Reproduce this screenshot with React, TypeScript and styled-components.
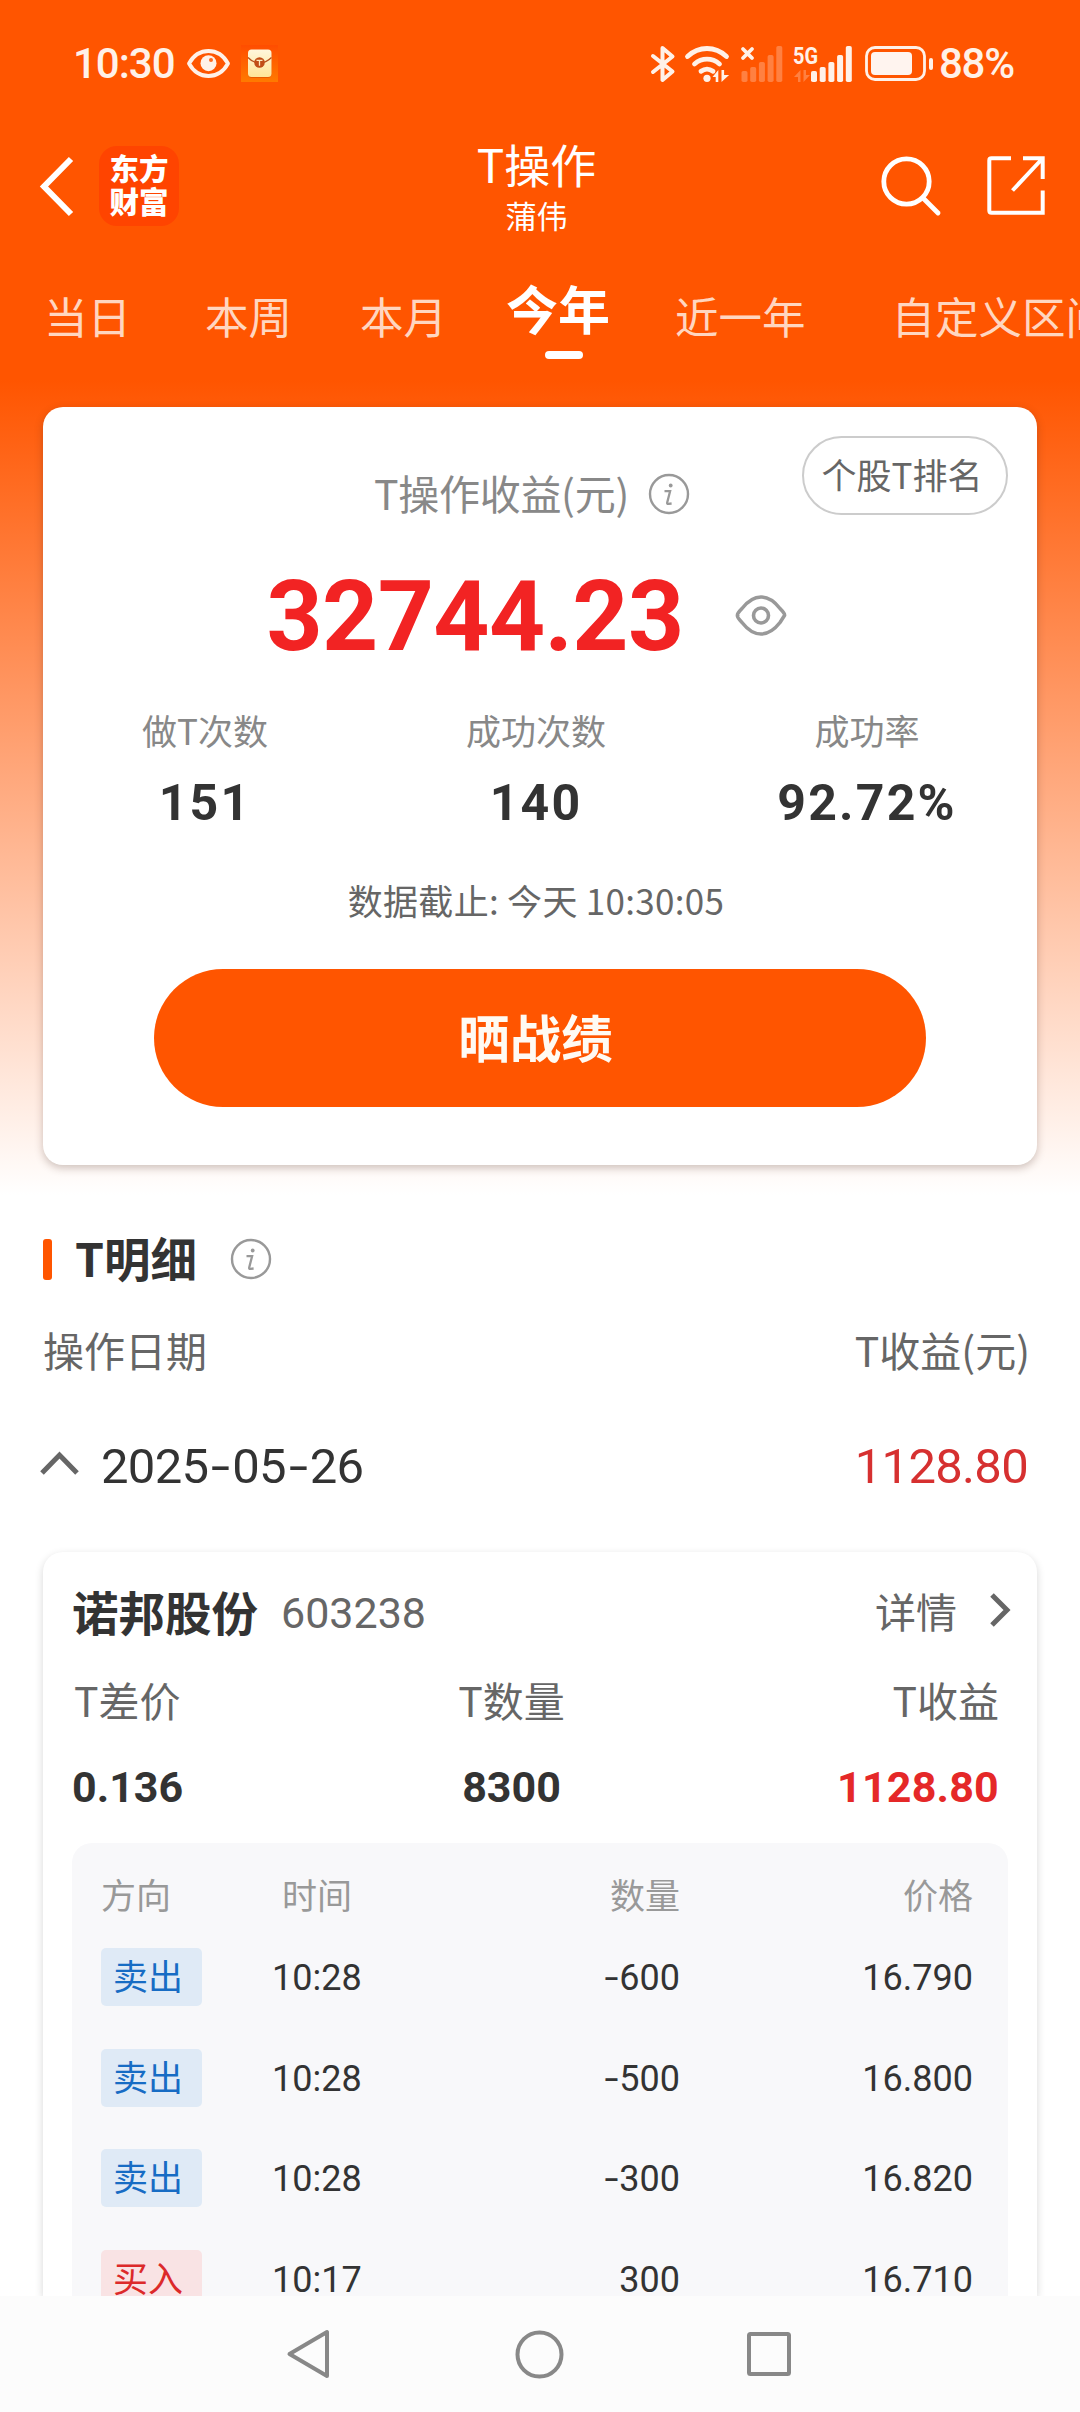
import React from "react";
import styled, { createGlobalStyle } from "styled-components";

const cjk = `"Noto Sans CJK SC", "Noto Sans", sans-serif`;
const digits = `Roboto, "Noto Sans CJK SC", sans-serif`;

const GlobalStyle = createGlobalStyle`
  * { box-sizing: border-box; }
  body { margin: 0; background: #fff; font-family: ${cjk}; color: #333; }
  button { font: inherit; border: 0; padding: 0; background: none; color: inherit; }
`;

const Screen = styled.div`
  width: 1080px;
  height: 2412px;
  overflow: hidden;
  display: flex;
  flex-direction: column;
  background: linear-gradient(180deg, #ff5500 0, #ff5500 380px, #ffffff 1195px);
  white-space: nowrap;
`;

/* ---------- status bar ---------- */
const StatusBar = styled.div`
  flex: none;
  height: 127px;
  padding: 0 66px 0 73px;
  display: flex;
  align-items: center;
  justify-content: space-between;
  color: #fff1e8;
`;
const StatusGroup = styled.div`
  display: flex;
  align-items: center;
`;
const StatusText = styled.span<{ $spacing: string; $ml?: number }>`
  font: 500 42px/42px ${digits};
  letter-spacing: ${(p) => p.$spacing};
  margin-left: ${(p) => p.$ml ?? 0}px;
`;
const Glyph = styled.svg<{ $ml?: number; $lift?: number }>`
  flex: none;
  display: block;
  overflow: visible;
  margin-left: ${(p) => p.$ml ?? 0}px;
  margin-bottom: ${(p) => p.$lift ?? 0}px;
`;

/* ---------- header ---------- */
const Header = styled.header`
  flex: none;
  height: 117px;
  padding: 0 35px 0 40px;
  display: grid;
  grid-template-columns: 400px 1fr 400px;
  align-items: center;
`;
const HeaderSide = styled.div<{ $end?: boolean }>`
  display: flex;
  align-items: center;
  justify-content: ${(p) => (p.$end ? "flex-end" : "flex-start")};
`;
const Logo = styled.div`
  width: 80px;
  height: 80px;
  margin-left: 25px;
  padding-bottom: 3px;
  border-radius: 18px;
  background: #ff4400;
  color: #fff;
  display: flex;
  flex-direction: column;
  align-items: center;
  justify-content: center;
  font-weight: 900;
  font-size: 29.5px;
  line-height: 33.5px;
`;
const TitleBlock = styled.div`
  display: flex;
  flex-direction: column;
  align-items: center;
  margin-right: 12px;
  color: #fff;
`;
const Title = styled.h1`
  margin: 0;
  font-weight: 400;
  font-size: 46px;
  line-height: 58px;
`;
const Subtitle = styled.div`
  font-size: 31px;
  line-height: 46px;
`;

/* ---------- tabs ---------- */
const Tabs = styled.nav`
  flex: none;
  height: 163px;
  padding-left: 44px;
  display: flex;
  align-items: flex-start;
  overflow: hidden;
`;
const Tab = styled.button<{ $gap?: number }>`
  flex: none;
  margin-left: ${(p) => p.$gap ?? 0}px;
  height: 120px;
  padding-top: 40px;
  display: flex;
  flex-direction: column;
  align-items: center;
  font-size: 43.5px;
  line-height: 64px;
  color: #ffd6c0;
`;
const ActiveTab = styled(Tab)`
  padding-top: 31px;
  font-size: 52px;
  font-weight: 700;
  line-height: 66px;
  color: #fff;
`;
const TabLine = styled.span`
  width: 38px;
  height: 8px;
  margin: 10px 0 0 11px;
  border-radius: 4px;
  background: #fff;
`;

/* ---------- summary card ---------- */
const Card = styled.section`
  flex: none;
  margin: 0 43px;
  border-radius: 20px;
  background: #fff;
  box-shadow: 0 3px 9px rgba(60, 30, 20, 0.26);
`;
const SummaryCard = styled(Card)`
  position: relative;
  height: 758px;
  display: flex;
  flex-direction: column;
  align-items: center;
`;
const RankButton = styled.button`
  position: absolute;
  top: 29px;
  right: 29px;
  width: 206px;
  height: 79px;
  padding: 0 6px 3px 0;
  border: 2px solid #ccc;
  border-radius: 40px;
  font-size: 35px;
  line-height: 72px;
  color: #666;
`;
const SummaryTitle = styled.div`
  margin-top: 58px;
  height: 58px;
  padding-right: 17px;
  display: flex;
  align-items: center;
  gap: 20px;
  font-size: 41px;
  line-height: 58px;
  letter-spacing: -0.3px;
  color: #888;
`;
const SummaryName = styled.span`
  padding-bottom: 5px;
`;
const AmountRow = styled.div`
  height: 100px;
  margin-top: 44px;
  padding-right: 27px;
  display: flex;
  align-items: center;
  gap: 51px;
`;
const Amount = styled.span`
  font: 700 98px/100px ${digits};
  letter-spacing: -0.6px;
  color: #f22323;
`;
const Stats = styled.div`
  width: 993px;
  margin: 38px 8px 0 0;
  display: grid;
  grid-template-columns: repeat(3, 1fr);
`;
const Stat = styled.div`
  display: flex;
  flex-direction: column;
  align-items: center;
`;
const StatLabel = styled.div`
  font-size: 35px;
  line-height: 50px;
  color: #888;
`;
const StatValue = styled.div`
  margin-top: 18px;
  font: 700 50px/60px ${digits};
  letter-spacing: 2.2px;
  color: #333;
`;
const Deadline = styled.div`
  margin: 42px 8px 0 0;
  font-size: 35px;
  line-height: 50px;
  letter-spacing: 0.3px;
  color: #666;
`;
const ShareButton = styled.button`
  width: 772px;
  height: 138px;
  margin-top: 44px;
  padding: 0 9px 5px 0;
  border-radius: 69px;
  background: #ff5500;
  color: #fffaf3;
  font-size: 51.5px;
  font-weight: 700;
  line-height: 133px;
`;

/* ---------- detail list ---------- */
const SectionHead = styled.div`
  flex: none;
  height: 60px;
  margin: 64px 43px 0;
  display: flex;
  align-items: center;
`;
const Accent = styled.span`
  width: 9px;
  height: 41px;
  border-radius: 3px;
  background: #ff5500;
`;
const SectionTitle = styled.h2`
  margin: 0 34px 4px 23px;
  font-weight: 700;
  font-size: 46.5px;
  line-height: 60px;
`;
const Line = styled.div<{ $top: number; $h: number }>`
  flex: none;
  height: ${(p) => p.$h}px;
  margin-top: ${(p) => p.$top}px;
  padding: 0 27px 0 29px;
  display: flex;
  align-items: center;
  justify-content: space-between;
`;
const ColumnLine = styled(Line)`
  padding: 0 50px 4px 43px;
`;
const DateLine = styled(Line)`
  padding: 0 52px 0 40px;
`;
const Label = styled.span<{ $size?: number; $tone?: string }>`
  font-size: ${(p) => p.$size ?? 41}px;
  color: ${(p) => p.$tone ?? "#666"};
`;
const DateGroup = styled.div`
  display: flex;
  align-items: center;
`;
const Digits = styled.span<{ $size: number; $bold?: boolean; $tone?: string; $ls?: number; $ml?: number; $mr?: number; $drop?: number }>`
  font: ${(p) => (p.$bold ? 700 : 400)} ${(p) => p.$size}px/1.2 ${digits};
  letter-spacing: ${(p) => p.$ls ?? 0}px;
  margin-left: ${(p) => p.$ml ?? 0}px;
  margin-right: ${(p) => p.$mr ?? 0}px;
  padding-top: ${(p) => p.$drop ?? 0}px;
  color: ${(p) => p.$tone ?? "#333"};
`;
const Dash = styled.span<{ $pad: number }>`
  display: inline-block;
  transform: scaleX(1.4);
  padding: 0 ${(p) => p.$pad}px;
`;
const ListViewport = styled.div`
  flex: none;
  height: 798px;
  overflow: hidden;
  display: flex;
  flex-direction: column;
`;
const StockCard = styled(Card)`
  height: 744px;
  margin-top: 54px;
  border-radius: 20px 20px 0 0;
  box-shadow: 0 3px 9px rgba(0, 0, 0, 0.16);
`;
const StockName = styled.span`
  font-size: 46.5px;
  font-weight: 700;
`;
const ThreeCols = styled.div<{ $top: number }>`
  height: 60px;
  margin-top: ${(p) => p.$top}px;
  padding: 0 38px 0 31px;
  display: grid;
  grid-template-columns: 1fr 1fr 1fr;
  align-items: center;
  & > :nth-child(2) { justify-self: center; margin-right: 50px; }
  & > :nth-child(3) { justify-self: end; }
`;
const TradeTable = styled.div`
  margin: 25px 29px 0;
  height: 520px;
  padding-top: 21px;
  border-radius: 20px 20px 0 0;
  background: #f8f8fa;
`;
const TradeRow = styled.div<{ $h: number }>`
  height: ${(p) => p.$h}px;
  padding: 0 35px 0 29px;
  display: grid;
  grid-template-columns: 172px 200px 207px 1fr;
  align-items: center;
  & > :nth-child(3), & > :nth-child(4) { justify-self: end; }
`;
const TradeHead = styled(TradeRow)`
  margin-bottom: 5px;
`;
const TimeHead = styled(Label)`
  padding-left: 9px;
`;
const Badge = styled.span<{ $buy?: boolean }>`
  width: 101px;
  height: 58px;
  padding-left: 12px;
  border-radius: 5px;
  font-size: 35px;
  line-height: 54px;
  color: ${(p) => (p.$buy ? "#dc2a2a" : "#176cc4")};
  background: ${(p) => (p.$buy ? "#f9e3e4" : "#dfeaf6")};
`;

/* ---------- system navigation ---------- */
const NavBar = styled.footer`
  flex: none;
  height: 116px;
  padding: 0 289px 0 287px;
  display: flex;
  align-items: center;
  justify-content: space-between;
  background: #fcfcfc;
`;

const InfoIcon = () => (
  <Glyph width="40" height="40" viewBox="0 0 40 40" fill="none" stroke="#999">
    <circle cx="20" cy="20" r="19" strokeWidth="2.4" />
    <circle cx="21.7" cy="11.5" r="1.9" fill="#999" stroke="none" />
    <path d="M15.500 17.200h5.600l-2.900 11.200q-.4 1.800 1.400 1.400l3-.3" strokeWidth="2.300" />
  </Glyph>
);

const SignalBars = ({ x, opacity }: { x: number; opacity: number }) => (
  <g fill="currentColor" opacity={opacity}>
    {[11, 15, 20, 27, 36].map((h, i) => (
      <rect key={h} x={x + i * 8.7} y={36 - h} width="6" height={h} rx="1.8" />
    ))}
  </g>
);

const trades = [
  { buy: false, time: "10:28", qty: -600, price: "16.790" },
  { buy: false, time: "10:28", qty: -500, price: "16.800" },
  { buy: false, time: "10:28", qty: -300, price: "16.820" },
  { buy: true, time: "10:17", qty: 300, price: "16.710" },
];

export default function App() {
  return (
    <>
      <GlobalStyle />
      <Screen>
        <StatusBar>
          <StatusGroup>
            <StatusText $spacing="-1px">10:30</StatusText>
            <Glyph $ml={12} width="43" height="29" viewBox="0 0 43 29">
              <path d="M2 14.500C7 5.500 14 2 21.500 2S36 5.500 41 14.500C36 23.500 29 27 21.500 27S7 23.500 2 14.500Z" fill="none" stroke="currentColor" strokeWidth="3.800" strokeLinejoin="round" />
              <circle cx="21.500" cy="14.200" r="8" fill="currentColor" />
              <circle cx="24" cy="11" r="2" fill="#ff6a20" />
            </Glyph>
            <Glyph $ml={11} width="37" height="37" viewBox="0 0 37 37">
              <defs>
                <linearGradient id="tile" x1="0" y1="0" x2="0" y2="1">
                  <stop offset="0" stopColor="#ff4d00" />
                  <stop offset="1" stopColor="#ff7a00" />
                </linearGradient>
                <linearGradient id="paper" x1="0" y1="0" x2="0" y2="1">
                  <stop offset="0" stopColor="#fff6dc" />
                  <stop offset="1" stopColor="#ffe596" />
                </linearGradient>
              </defs>
              <rect width="37" height="37" fill="url(#tile)" />
              <rect x="7" y="5" width="23.500" height="28" rx="4" fill="#d94a00" opacity=".6" />
              <rect x="7" y="4.500" width="23.500" height="27.500" rx="3.500" fill="url(#paper)" />
              <path d="M7 12.500Q12 18 18.500 18T30.500 12.500" fill="none" stroke="#b8501c" strokeWidth="1.300" />
              <circle cx="18.500" cy="17.500" r="5.300" fill="#c24d16" />
              <path d="M15.500 15.300h6M18.500 15.300v5.500" stroke="#ffe9bd" strokeWidth="1.300" />
            </Glyph>
          </StatusGroup>
          <StatusGroup>
            <Glyph width="24" height="36" viewBox="0 0 24 36" fill="none" stroke="currentColor" strokeWidth="4" strokeLinecap="round" strokeLinejoin="round">
              <path d="M2 10L21.500 25.500L11.500 34V2L21.500 10.500L2 26" />
            </Glyph>
            <Glyph $ml={10} width="45" height="36" viewBox="0 0 45 36" fill="none" stroke="currentColor" strokeWidth="4.800" strokeLinecap="round">
              <path d="M2.500 10.500Q11 2.500 22 2.500T41.500 10.500" />
              <path d="M9.500 18Q15 13.200 22 13.200T34.500 18" />
              <path d="M16 25.300Q22 21 28 25.300" />
              <circle cx="22" cy="32.300" r="3.600" fill="currentColor" stroke="none" />
              <path d="M33.800 24v12h-2.600v-5H28zM37 24h2.600v5h5L37 36z" fill="currentColor" stroke="none" transform="translate(-.5 0)" />
            </Glyph>
            <Glyph $ml={11} width="42" height="36" viewBox="0 0 42 36">
              <path d="M2 3l9 9M11 3l-9 9" stroke="currentColor" strokeWidth="3.800" strokeLinecap="round" />
              <SignalBars x={0.5} opacity={0.28} />
            </Glyph>
            <Glyph $ml={11} width="57" height="36" viewBox="0 0 57 36">
              <text x="-1" y="17.500" fontFamily="Roboto, sans-serif" fontSize="24" fontWeight="700" fill="currentColor" textLength="25" lengthAdjust="spacingAndGlyphs">5G</text>
              <path d="M6.500 24v12H4v-5H0zM9.500 24H12v5h4L9.500 36z" fill="currentColor" opacity=".28" />
              <SignalBars x={17} opacity={1} />
            </Glyph>
            <Glyph $ml={14} width="69" height="35" viewBox="0 0 69 35">
              <rect x="1.500" y="1.500" width="58" height="32" rx="8.500" fill="none" stroke="currentColor" strokeWidth="2.800" />
              <rect x="6" y="6" width="41" height="23" rx="4" fill="#fff4ef" />
              <rect x="64" y="12" width="4" height="12" rx="2" fill="currentColor" />
            </Glyph>
            <StatusText $spacing="-1.2px" $ml={5}>88%</StatusText>
          </StatusGroup>
        </StatusBar>

        <Header>
          <HeaderSide>
            <Glyph width="34" height="60" viewBox="0 0 34 60" fill="none" stroke="#fff" strokeWidth="6">
              <path d="M31 3L4 30.500L31 58" />
            </Glyph>
            <Logo>
              <span>东方</span>
              <span>财富</span>
            </Logo>
          </HeaderSide>
          <TitleBlock>
            <Title>T操作</Title>
            <Subtitle>蒲伟</Subtitle>
          </TitleBlock>
          <HeaderSide $end>
            <Glyph width="60" height="60" viewBox="0 0 60 60" fill="none" stroke="#fff" strokeWidth="4.800" strokeLinecap="round">
              <circle cx="25.500" cy="25.500" r="22.700" />
              <path d="M42 42L57 57" />
            </Glyph>
            <Glyph $ml={46} width="58" height="59" viewBox="0 0 58 59" fill="none" stroke="#fff" strokeWidth="4">
              <path d="M24 2.300H4.500Q2.300 2.300 2.300 4.500V54.500Q2.300 56.700 4.500 56.700H55.700V34.500" />
              <path d="M36 2.300H55.700V23M55 3L25.500 34.500" />
            </Glyph>
          </HeaderSide>
        </Header>

        <Tabs>
          <Tab>当日</Tab>
          <Tab $gap={74}>本周</Tab>
          <Tab $gap={68}>本月</Tab>
          <ActiveTab $gap={59}>
            今年
            <TabLine />
          </ActiveTab>
          <Tab $gap={65}>近一年</Tab>
          <Tab $gap={86}>自定义区间</Tab>
        </Tabs>

        <SummaryCard>
          <RankButton>个股T排名</RankButton>
          <SummaryTitle>
            <SummaryName>T操作收益(元)</SummaryName>
            <InfoIcon />
          </SummaryTitle>
          <AmountRow>
            <Amount>32744.23</Amount>
            <Glyph $lift={4} width="52" height="41" viewBox="0 0 52 41" fill="none" stroke="#999" strokeWidth="3.600">
              <path d="M2.500 20.500Q1.500 19 7 13.500Q16 2 26 2T45 13.500Q50.500 19 49.500 20.500T45 27.500Q36 39 26 39T7 27.500Q1.500 22 2.500 20.500Z" />
              <circle cx="26" cy="20.500" r="7.500" />
            </Glyph>
          </AmountRow>
          <Stats>
            <Stat><StatLabel>做T次数</StatLabel><StatValue>151</StatValue></Stat>
            <Stat><StatLabel>成功次数</StatLabel><StatValue>140</StatValue></Stat>
            <Stat><StatLabel>成功率</StatLabel><StatValue>92.72%</StatValue></Stat>
          </Stats>
          <Deadline>数据截止: 今天 10:30:05</Deadline>
          <ShareButton>晒战绩</ShareButton>
        </SummaryCard>

        <SectionHead>
          <Accent />
          <SectionTitle>T明细</SectionTitle>
          <InfoIcon />
        </SectionHead>

        <ColumnLine $top={32} $h={60}>
          <Label>操作日期</Label>
          <Label>T收益(元)</Label>
        </ColumnLine>

        <DateLine $top={56} $h={61}>
          <DateGroup>
            <Glyph $lift={7} width="39" height="25" viewBox="0 0 39 25" fill="none" stroke="#666" strokeWidth="5">
              <path d="M2 22L19.500 4L37 22" />
            </Glyph>
            <Digits $size={49} $ml={22} $ls={-0.7}>2025<Dash $pad={5.5}>-</Dash>05<Dash $pad={5.5}>-</Dash>26</Digits>
          </DateGroup>
          <Digits $size={49} $tone="#d63030" $ls={-0.7}>1128.80</Digits>
        </DateLine>

        <ListViewport>
          <StockCard>
            <Line $top={28} $h={60}>
              <DateGroup>
                <StockName>诺邦股份</StockName>
                <Digits $size={43} $ml={23} $tone="#666" $drop={8}>603238</Digits>
              </DateGroup>
              <DateGroup>
                <Label>详情</Label>
                <Glyph $ml={33} width="20" height="34" viewBox="0 0 20 34" fill="none" stroke="#666" strokeWidth="5">
                  <path d="M2 2L17 17L2 32" />
                </Glyph>
              </DateGroup>
            </Line>
            <ThreeCols $top={29}>
              <Label>T差价</Label>
              <Label>T数量</Label>
              <Label>T收益</Label>
            </ThreeCols>
            <ThreeCols $top={29}>
              <Digits $size={43} $bold $ml={-2}>0.136</Digits>
              <Digits $size={43} $bold>8300</Digits>
              <Digits $size={43} $bold $tone="#e52828" $ls={0.2}>1128.80</Digits>
            </ThreeCols>
            <TradeTable>
              <TradeHead $h={58}>
                <Label $size={35} $tone="#999">方向</Label>
                <TimeHead $size={35} $tone="#999">时间</TimeHead>
                <Label $size={35} $tone="#999">数量</Label>
                <Label $size={35} $tone="#999">价格</Label>
              </TradeHead>
              {trades.map((t, i) => (
                <TradeRow key={i} $h={100.6}>
                  <Badge $buy={t.buy}>{t.buy ? "买入" : "卖出"}</Badge>
                  <Digits $size={36} $ml={-1} $drop={3}>{t.time}</Digits>
                  <Digits $size={36} $drop={3}>
                    {t.qty < 0 && <Dash $pad={2.5}>-</Dash>}
                    {Math.abs(t.qty)}
                  </Digits>
                  <Digits $size={36} $drop={3}>{t.price}</Digits>
                </TradeRow>
              ))}
            </TradeTable>
          </StockCard>
        </ListViewport>

        <NavBar>
          <Glyph width="43" height="50" viewBox="0 0 43 50" fill="none" stroke="#888" strokeWidth="4" strokeLinejoin="round">
            <path d="M40 3V47L2.500 25Z" />
          </Glyph>
          <Glyph width="49" height="49" viewBox="0 0 49 49" fill="none" stroke="#888" strokeWidth="4">
            <circle cx="25.500" cy="24.500" r="22" />
          </Glyph>
          <Glyph width="44" height="44" viewBox="0 0 44 44" fill="none" stroke="#888" strokeWidth="4">
            <rect x="2" y="2" width="40" height="40" rx="1.500" />
          </Glyph>
        </NavBar>
      </Screen>
    </>
  );
}
